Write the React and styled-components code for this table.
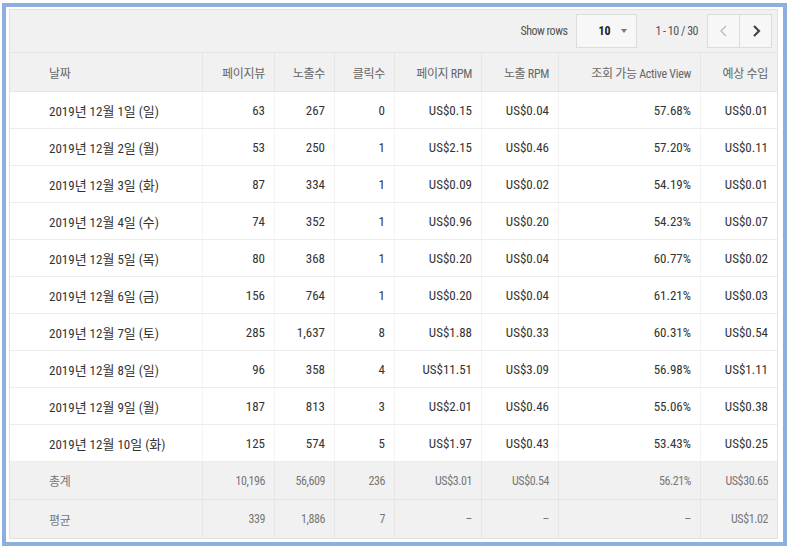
import React from 'react';
import styled, { createGlobalStyle } from 'styled-components';

const GlobalStyle = createGlobalStyle`
  html, body {
    margin: 0;
    padding: 0;
    background: #ffffff;
  }
  body {
    font-family: 'Roboto Condensed', 'Roboto', 'Noto Sans CJK KR', sans-serif;
  }
`;

const COLUMNS = '193px 72px 60px 60px 87px 77px 142px 76px';

const Page = styled.div`
  padding: 3px 0 0 2px;
`;

const Frame = styled.div`
  box-sizing: border-box;
  width: 785px;
  border: 4px solid #8eaedf;
  background: #ffffff;
  padding: 2px 5px 3px 3px;
`;

const Panel = styled.div`
  border: 1px solid #e2e2e2;
  background: #f1f1f1;
  color: #333;
`;

const Toolbar = styled.div`
  display: flex;
  align-items: center;
  justify-content: flex-end;
  height: 43px;
  box-sizing: border-box;
  padding-right: 5px;
  border-bottom: 1px solid #e4e4e4;
  font-size: 12px;
  letter-spacing: -0.5px;
  color: #555;
`;

const Label = styled.span`
  margin-right: 9px;
`;

const Select = styled.div`
  display: flex;
  align-items: center;
  justify-content: space-between;
  box-sizing: border-box;
  width: 61px;
  height: 34px;
  padding: 0 9px 0 21px;
  border: 1px solid #dcdcdc;
  background: #f7f7f7;
  font-weight: 700;
  font-size: 12px;
  letter-spacing: 0;
  color: #222;
  margin-right: 18px;
`;

const Caret = styled.span`
  width: 0;
  height: 0;
  border-left: 3.5px solid transparent;
  border-right: 3.5px solid transparent;
  border-top: 4px solid #777;
`;

const Range = styled.span`
  margin-right: 9px;
`;

const Pager = styled.div`
  display: flex;
  border: 1px solid #dcdcdc;
  background: #f7f7f7;
`;

const PageButton = styled.div`
  display: flex;
  align-items: center;
  justify-content: center;
  width: 31px;
  height: 32px;
  color: ${(p) => (p.disabled ? '#c2c2c2' : '#444')};
  & + & {
    border-left: 1px solid #dcdcdc;
  }
`;

const Row = styled.div`
  display: grid;
  grid-template-columns: ${COLUMNS};
  box-sizing: border-box;
  height: ${(p) => (p.kind === 'body' ? 37 : p.kind === 'head' ? 39 : 38)}px;
  background: ${(p) => (p.kind === 'body' ? '#ffffff' : '#f1f1f1')};
  border-bottom: 1px solid ${(p) => (p.kind === 'body' ? '#ececec' : '#e4e4e4')};
  color: ${(p) => (p.kind === 'body' ? '#333' : p.kind === 'head' ? '#666' : '#777')};
  font-size: ${(p) => (p.kind === 'body' ? 13 : 12)}px;
  letter-spacing: ${(p) => (p.kind === 'head' ? '-0.3px' : p.kind === 'foot' ? '-0.4px' : '0')};
  &:last-child {
    border-bottom: none;
  }
`;

const Cell = styled.div`
  display: flex;
  align-items: center;
  justify-content: ${(p) => (p.first ? 'flex-start' : 'flex-end')};
  padding: ${(p) => (p.first ? '0 0 0 39px' : '0 9px 0 0')};
  white-space: nowrap;
  border-right: 1px solid ${(p) => (p.kind === 'body' ? '#f3f3f3' : '#e6e6e6')};
  &:last-child {
    border-right: none;
  }
`;

const HEAD = ['날짜', '페이지뷰', '노출수', '클릭수', '페이지 RPM', '노출 RPM', '조회 가능 Active View', '예상 수입'];

const ROWS = [
  ['2019년 12월 1일 (일)', '63', '267', '0', 'US$0.15', 'US$0.04', '57.68%', 'US$0.01'],
  ['2019년 12월 2일 (월)', '53', '250', '1', 'US$2.15', 'US$0.46', '57.20%', 'US$0.11'],
  ['2019년 12월 3일 (화)', '87', '334', '1', 'US$0.09', 'US$0.02', '54.19%', 'US$0.01'],
  ['2019년 12월 4일 (수)', '74', '352', '1', 'US$0.96', 'US$0.20', '54.23%', 'US$0.07'],
  ['2019년 12월 5일 (목)', '80', '368', '1', 'US$0.20', 'US$0.04', '60.77%', 'US$0.02'],
  ['2019년 12월 6일 (금)', '156', '764', '1', 'US$0.20', 'US$0.04', '61.21%', 'US$0.03'],
  ['2019년 12월 7일 (토)', '285', '1,637', '8', 'US$1.88', 'US$0.33', '60.31%', 'US$0.54'],
  ['2019년 12월 8일 (일)', '96', '358', '4', 'US$11.51', 'US$3.09', '56.98%', 'US$1.11'],
  ['2019년 12월 9일 (월)', '187', '813', '3', 'US$2.01', 'US$0.46', '55.06%', 'US$0.38'],
  ['2019년 12월 10일 (화)', '125', '574', '5', 'US$1.97', 'US$0.43', '53.43%', 'US$0.25'],
];

const FOOT = [
  ['총계', '10,196', '56,609', '236', 'US$3.01', 'US$0.54', '56.21%', 'US$30.65'],
  ['평균', '339', '1,886', '7', '–', '–', '–', 'US$1.02'],
];

const Chevron = ({ dir }) => (
  <svg width="14" height="14" viewBox="0 0 14 14">
    <polyline
      points={dir === 'left' ? '9,2 4,7 9,12' : '5,2 10,7 5,12'}
      fill="none"
      stroke="currentColor"
      strokeWidth={dir === 'left' ? 1.6 : 2.2}
    />
  </svg>
);

const TableRow = ({ kind, cells }) => (
  <Row kind={kind}>
    {cells.map((c, i) => (
      <Cell key={i} kind={kind} first={i === 0}>
        {c}
      </Cell>
    ))}
  </Row>
);

const App = () => {
  return (
    <Page>
      <GlobalStyle />
      <Frame>
        <Panel>
          <Toolbar>
            <Label>Show rows</Label>
            <Select>
              10
              <Caret />
            </Select>
            <Range>1 - 10 / 30</Range>
            <Pager>
              <PageButton disabled>
                <Chevron dir="left" />
              </PageButton>
              <PageButton>
                <Chevron dir="right" />
              </PageButton>
            </Pager>
          </Toolbar>
          <TableRow kind="head" cells={HEAD} />
          {ROWS.map((r) => (
            <TableRow key={r[0]} kind="body" cells={r} />
          ))}
          {FOOT.map((r) => (
            <TableRow key={r[0]} kind="foot" cells={r} />
          ))}
        </Panel>
      </Frame>
    </Page>
  );
};

export default App;
